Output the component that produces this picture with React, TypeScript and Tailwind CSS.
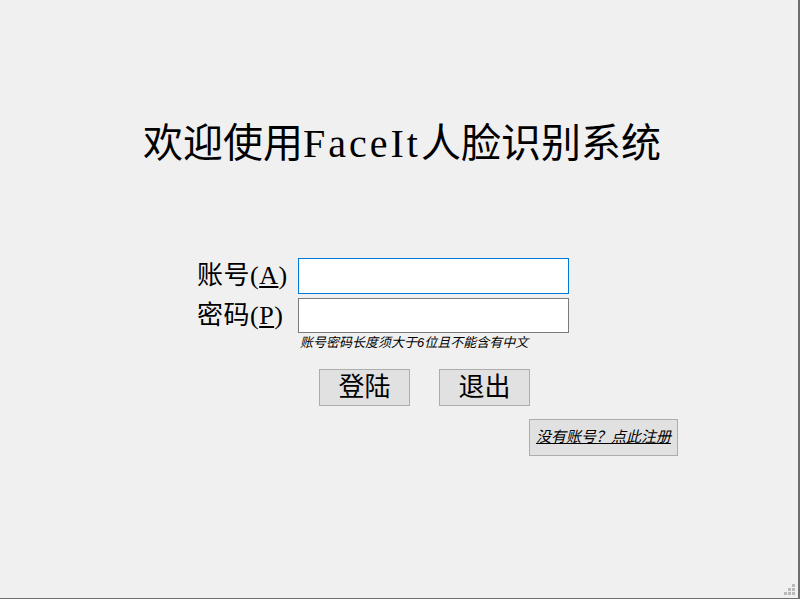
import React from "react";

const serif = { fontFamily: '"Liberation Serif", "Noto Sans CJK SC", serif' };
const sans = { fontFamily: '"Liberation Sans", "Noto Sans CJK SC", sans-serif' };

export default function App() {
  return (
    <div className="relative w-[800px] h-[599px] bg-[#f0f0f0] border-r-2 border-b border-[#6e6e6e] text-black overflow-hidden">
      <div className="pt-[120px] pl-[6px] text-center text-[40px] leading-[48px]" style={serif}>
        欢迎使用<span className="tracking-[3px]">FaceIt</span>人脸识别系统
      </div>

      <div className="mt-[90px] flex flex-col">
        <div className="flex items-center h-[36px] pl-[197px]">
          <div className="w-[101px] text-[26px] leading-[30px] tracking-[0.5px]" style={serif}>
            账号(<span className="underline underline-offset-2">A</span>)
          </div>
          <div className="w-[271px] h-[36px] bg-white border border-[#0078d7]" />
        </div>
        <div className="flex items-center h-[35px] mt-[4px] pl-[197px]">
          <div className="w-[101px] text-[26px] leading-[30px] tracking-[0.5px]" style={serif}>
            密码(<span className="underline underline-offset-2">P</span>)
          </div>
          <div className="w-[271px] h-[35px] bg-white border border-[#7a7a7a]" />
        </div>
        <div className="pl-[300px] mt-[2px] text-[13px] leading-[16px] italic" style={sans}>
          账号密码长度须大于6位且不能含有中文
        </div>
        <div className="flex mt-[18px] pl-[319px] gap-[29px]">
          <div
            className="w-[91px] h-[37px] bg-[#e1e1e1] border border-[#adadad] flex items-center justify-center text-[26px]"
            style={serif}
          >
            登陆
          </div>
          <div
            className="w-[91px] h-[37px] bg-[#e1e1e1] border border-[#adadad] flex items-center justify-center text-[26px]"
            style={serif}
          >
            退出
          </div>
        </div>
        <div className="mt-[13px] ml-[529px]">
          <div
            className="w-[149px] h-[37px] bg-[#e1e1e1] border border-[#adadad] flex items-center justify-center text-[15px] italic underline"
            style={sans}
          >
            没有账号？点此注册
          </div>
        </div>
      </div>

      <svg className="absolute right-[2px] bottom-[2px]" width="12" height="12" viewBox="0 0 12 12">
        <rect x="8" y="0" width="3" height="3" fill="#b9b9b9" />
        <rect x="4" y="4" width="3" height="3" fill="#b9b9b9" />
        <rect x="8" y="4" width="3" height="3" fill="#b9b9b9" />
        <rect x="0" y="8" width="3" height="3" fill="#b9b9b9" />
        <rect x="4" y="8" width="3" height="3" fill="#b9b9b9" />
        <rect x="8" y="8" width="3" height="3" fill="#b9b9b9" />
      </svg>
    </div>
  );
}
